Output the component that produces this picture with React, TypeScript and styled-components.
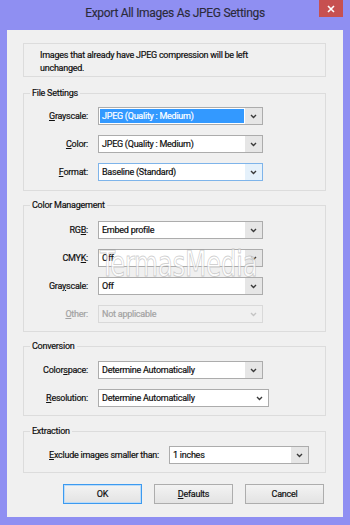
import React from "react";
import styled, { createGlobalStyle } from "styled-components";

const Global = createGlobalStyle`
  html, body { margin: 0; padding: 0; background: #8f8ff2; }
  * { box-sizing: border-box; }
`;

const FONT = `Roboto, "Noto Sans", sans-serif`;

const Frame = styled.div`
  width: 350px;
  height: 525px;
  background: #8f8ff2;
  display: flex;
  flex-direction: column;
  padding: 0 7px 8px 7px;
  font-family: ${FONT};
`;

const TitleBar = styled.div`
  height: 30px;
  display: grid;
  grid-template-columns: 1fr auto;
  align-items: start;
`;

const Title = styled.div`
  grid-column: 1 / 3;
  grid-row: 1;
  justify-self: center;
  margin-top: 6px;
  font-size: 12px;
  letter-spacing: -0.3px;
  color: #2b2b3a;
  -webkit-text-stroke: 0.15px #2b2b3a;
`;

const CloseButton = styled.div`
  grid-column: 2;
  grid-row: 1;
  width: 24px;
  height: 17px;
  background: #c75050;
  display: flex;
  align-items: center;
  justify-content: center;
  z-index: 1;
`;

const Client = styled.div`
  flex: 1;
  background: #f0f0f0;
  padding: 13px 17px 0 16px;
  display: flex;
  flex-direction: column;
  position: relative;
  font-size: 9px;
  letter-spacing: -0.25px;
  color: #111111;
  -webkit-text-stroke: 0.2px currentColor;
`;

const InfoBox = styled.div`
  height: 34px;
  border: 1px solid #dcdcdc;
  background: #f0f0f0;
  padding: 5px 16px 0 16px;
  line-height: 12.5px;
`;

const Group = styled.fieldset<{ $top: number; $padTop: number; $padBottom: number }>`
  margin: ${(p) => p.$top}px 0 0 0;
  border: 1px solid #dcdcdc;
  padding: ${(p) => p.$padTop}px 0 ${(p) => p.$padBottom}px 0;
  min-width: 0;
`;

const Legend = styled.legend`
  margin-left: 6px;
  padding: 0 2px;
  line-height: 13px;
  font-size: 9px;
  color: #111111;
`;

const Rows = styled.div<{ $label: number }>`
  display: grid;
  grid-template-columns: ${(p) => p.$label}px auto;
  column-gap: 10px;
  row-gap: 10px;
  align-items: center;
  justify-content: start;
`;

const Label = styled.div<{ $disabled?: boolean }>`
  text-align: right;
  white-space: nowrap;
  color: ${(p) => (p.$disabled ? "#a3a3a3" : "#111111")};
`;

const Key = styled.span`
  text-decoration: underline;
  text-underline-offset: 1px;
`;

type Variant = "normal" | "selected" | "focused" | "disabled" | "plain";

const SelectBox = styled.div<{ $w: number; $v: Variant }>`
  width: ${(p) => p.$w}px;
  height: 18px;
  display: grid;
  grid-template-columns: 1fr 17px;
  border: 1px solid
    ${(p) =>
      p.$v === "focused" ? "#7eb4ea" : p.$v === "disabled" ? "#d9d9d9" : "#acacac"};
  background: ${(p) => (p.$v === "disabled" ? "#f0f0f0" : "#ffffff")};
  color: ${(p) => (p.$v === "disabled" ? "#a3a3a3" : "#111111")};
`;

const Value = styled.div<{ $v: Variant }>`
  display: flex;
  align-items: center;
  padding-left: ${(p) => (p.$v === "selected" ? 2 : 3)}px;
  margin: ${(p) => (p.$v === "selected" ? "1px" : "0")};
  background: ${(p) => (p.$v === "selected" ? "#3399ff" : "transparent")};
  color: ${(p) => (p.$v === "selected" ? "#ffffff" : "inherit")};
  white-space: nowrap;
  overflow: hidden;
  line-height: 14px;
`;

const Arrow = styled.div<{ $v: Variant }>`
  display: flex;
  align-items: center;
  justify-content: center;
  background: ${(p) =>
    p.$v === "focused"
      ? "#e5f1fb"
      : p.$v === "disabled"
      ? "#f0f0f0"
      : p.$v === "plain"
      ? "#ffffff"
      : "#e6e6e6"};
`;

const Chevron = ({ color }: { color: string }) => (
  <svg width="7" height="5" viewBox="0 0 7 5">
    <path d="M1 1 L3.5 3.5 L6 1" fill="none" stroke={color} strokeWidth="1.4" />
  </svg>
);

const Select = ({ w, v = "normal", value }: { w: number; v?: Variant; value: string }) => (
  <SelectBox $w={w} $v={v}>
    <Value $v={v}>{value}</Value>
    <Arrow $v={v}>
      <Chevron color={v === "disabled" ? "#c4c4c4" : "#3a3a3a"} />
    </Arrow>
  </SelectBox>
);

const Buttons = styled.div`
  display: flex;
  justify-content: flex-end;
  gap: 12px;
  margin-top: 11px;
  padding-right: 2px;
`;

const Button = styled.div<{ $default?: boolean }>`
  width: 79px;
  height: 20px;
  display: flex;
  align-items: center;
  justify-content: center;
  border: 1px solid ${(p) => (p.$default ? "#3c9af0" : "#adadad")};
  box-shadow: ${(p) => (p.$default ? "inset 0 0 0 1px #bcdcf8" : "none")};
  background: linear-gradient(#f3f3f3, #e3e3e3);
  color: #111111;
`;

const Watermark = styled.div`
  position: absolute;
  left: 93px;
  top: 212px;
  font-family: "Liberation Sans Narrow", "DejaVu Sans Condensed", sans-serif;
  font-size: 32px;
  letter-spacing: -0.5px;
  color: rgba(255, 255, 255, 0.75);
  -webkit-text-stroke: 0.8px rgba(150, 150, 150, 0.45);
  pointer-events: none;
  transform: scale(0.86, 1.12);
  transform-origin: left top;
`;

export default function App() {
  return (
    <>
      <Global />
      <Frame>
        <TitleBar>
          <Title>Export All Images As JPEG Settings</Title>
          <CloseButton>
            <svg width="8" height="8" viewBox="0 0 8 8">
              <path d="M1 1 L7 7 M7 1 L1 7" stroke="#ffffff" strokeWidth="1.6" />
            </svg>
          </CloseButton>
        </TitleBar>
        <Client>
          <InfoBox>
            Images that already have JPEG compression will be left
            <br />
            unchanged.
          </InfoBox>

          <Group $top={10} $padTop={7} $padBottom={9}>
            <Legend>File Settings</Legend>
            <Rows $label={64}>
              <Label>
                <Key>G</Key>rayscale:
              </Label>
              <Select w={165} v="selected" value="JPEG (Quality : Medium)" />
              <Label>
                <Key>C</Key>olor:
              </Label>
              <Select w={165} value="JPEG (Quality : Medium)" />
              <Label>
                <Key>F</Key>ormat:
              </Label>
              <Select w={165} v="focused" value="Baseline (Standard)" />
            </Rows>
          </Group>

          <Group $top={8} $padTop={9} $padBottom={8}>
            <Legend>Color Management</Legend>
            <Rows $label={64}>
              <Label>
                RG<Key>B</Key>:
              </Label>
              <Select w={165} value="Embed profile" />
              <Label>
                CMY<Key>K</Key>:
              </Label>
              <Select w={165} value="Off" />
              <Label>
                Gra<Key>y</Key>scale:
              </Label>
              <Select w={165} value="Off" />
              <Label $disabled>
                <Key>O</Key>ther:
              </Label>
              <Select w={165} v="disabled" value="Not applicable" />
            </Rows>
          </Group>

          <Group $top={8} $padTop={8} $padBottom={8}>
            <Legend>Conversion</Legend>
            <Rows $label={64}>
              <Label>
                Color<Key>s</Key>pace:
              </Label>
              <Select w={165} value="Determine Automatically" />
              <Label>
                <Key>R</Key>esolution:
              </Label>
              <Select w={171} v="plain" value="Determine Automatically" />
            </Rows>
          </Group>

          <Group $top={9} $padTop={8} $padBottom={8}>
            <Legend>Extraction</Legend>
            <Rows $label={135}>
              <Label>
                <Key>E</Key>xclude images smaller than:
              </Label>
              <Select w={140} value="1 inches" />
            </Rows>
          </Group>

          <Buttons>
            <Button $default>OK</Button>
            <Button>
              <Key>D</Key>efaults
            </Button>
            <Button>Cancel</Button>
          </Buttons>

          <Watermark>TermasMedia</Watermark>
        </Client>
      </Frame>
    </>
  );
}
